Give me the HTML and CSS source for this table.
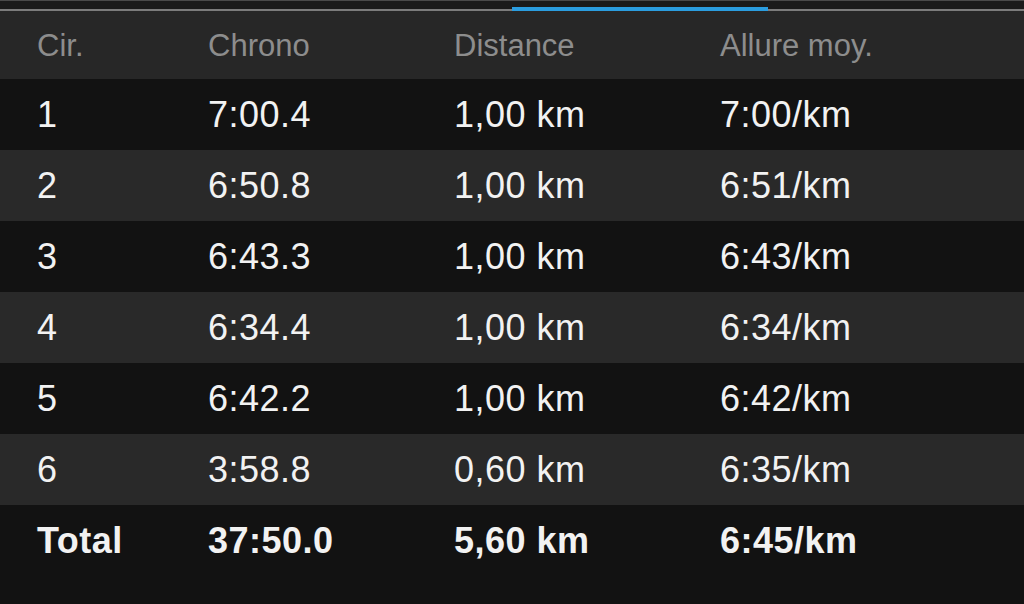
FILE: index.html
```html
<!DOCTYPE html>
<html lang="fr">
<head>
    <meta charset="UTF-8">
    <meta name="viewport" content="width=device-width, initial-scale=1.0">
    <title>Circuits</title>
    <link rel="stylesheet" href="styles.css">
</head>
<body>
    <div class="tabs">
        <div class="tab"></div>
        <div class="tab"></div>
        <div class="tab active"></div>
        <div class="tab"></div>
    </div>

    <div class="laps">
        <div class="row head">
            <span>Cir.</span>
            <span>Chrono</span>
            <span>Distance</span>
            <span>Allure moy.</span>
        </div>
        <div class="row dark">
            <span>1</span><span>7:00.4</span><span>1,00 km</span><span>7:00/km</span>
        </div>
        <div class="row light">
            <span>2</span><span>6:50.8</span><span>1,00 km</span><span>6:51/km</span>
        </div>
        <div class="row dark">
            <span>3</span><span>6:43.3</span><span>1,00 km</span><span>6:43/km</span>
        </div>
        <div class="row light">
            <span>4</span><span>6:34.4</span><span>1,00 km</span><span>6:34/km</span>
        </div>
        <div class="row dark">
            <span>5</span><span>6:42.2</span><span>1,00 km</span><span>6:42/km</span>
        </div>
        <div class="row light">
            <span>6</span><span>3:58.8</span><span>0,60 km</span><span>6:35/km</span>
        </div>
        <div class="row dark total">
            <span>Total</span><span>37:50.0</span><span>5,60 km</span><span>6:45/km</span>
        </div>
    </div>
</body>
</html>
```

FILE: styles.css
```css
body {
    margin: 0;
    padding: 0;
    background: #121212;
    font-family: 'Liberation Sans', Arial, sans-serif;
    width: 1024px;
    height: 604px;
    overflow: hidden;
}

/* tab strip at the top */
.tabs {
    display: flex;
    height: 11px;
    background: #1b1b1b;
    border-top: 1px solid #4a4a4a;
    box-sizing: border-box;
}
.tab {
    flex: 1;
    border-bottom: 2px solid #7c7c7c;
}
.tab.active {
    border-bottom: 4px solid #2b9ddf;
}

/* laps table */
.row {
    display: grid;
    grid-template-columns: 171px 246px 266px 1fr;
    align-items: center;
    height: 71px;
    padding-left: 37px;
    color: #f2f2f2;
    font-size: 36px;
    letter-spacing: 0.5px;
}
.row.head {
    height: 68px;
    padding-top: 2px;
    box-sizing: border-box;
    background: #272727;
    color: #8d8d8d;
    font-size: 31px;
    letter-spacing: 0;
}
.row.dark {
    background: #121212;
}
.row.light {
    background: #292929;
}
.row.total {
    font-weight: bold;
}
```
